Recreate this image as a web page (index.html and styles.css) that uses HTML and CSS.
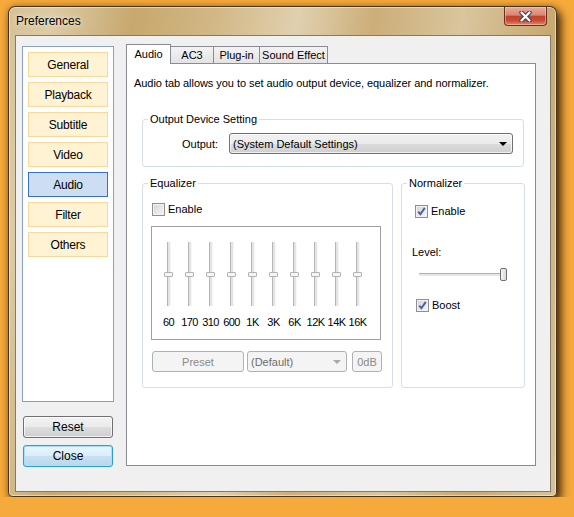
FILE: index.html
```html
<!DOCTYPE html>
<html lang="en">
<head>
    <meta charset="UTF-8">
    <title>Preferences</title>
    <link rel="stylesheet" href="styles.css">
</head>
<body>
    <div class="window">
        <div class="titlebar">
            <span class="title">Preferences</span>
            <button class="close-btn" type="button">
                <svg width="13" height="11" viewBox="0 0 13 11">
                    <path d="M2.5 1.5 L10.5 9.5 M10.5 1.5 L2.5 9.5" stroke="#3a4658" stroke-width="4.4" stroke-linecap="round"/>
                    <path d="M2.5 1.5 L10.5 9.5 M10.5 1.5 L2.5 9.5" stroke="#fff" stroke-width="2.2" stroke-linecap="round"/>
                </svg>
            </button>
        </div>

        <div class="client">
            <div class="sidebar">
                <div class="nav-list">
                    <div class="nav-item">General</div>
                    <div class="nav-item">Playback</div>
                    <div class="nav-item">Subtitle</div>
                    <div class="nav-item">Video</div>
                    <div class="nav-item active">Audio</div>
                    <div class="nav-item">Filter</div>
                    <div class="nav-item">Others</div>
                </div>
                <button class="btn reset" type="button">Reset</button>
                <button class="btn btn-default" type="button">Close</button>
            </div>

            <div class="tabs">
                <div class="tab-strip">
                    <div class="tab active" style="width: 45px;">Audio</div>
                    <div class="tab" style="width: 44px;">AC3</div>
                    <div class="tab" style="width: 47px;">Plug-in</div>
                    <div class="tab" style="width: 69px;">Sound Effect</div>
                </div>

                <div class="tab-panel">
                    <p class="desc">Audio tab allows you to set audio output device, equalizer and normalizer.</p>

                    <fieldset class="group output-group">
                        <legend>Output Device Setting</legend>
                        <div class="output-row">
                            <label>Output:</label>
                            <div class="select">
                                <span>(System Default Settings)</span>
                                <span class="arrow"></span>
                            </div>
                        </div>
                    </fieldset>

                    <div class="group-row">
                        <fieldset class="group eq-group">
                            <legend>Equalizer</legend>
                            <div class="check-row eq-enable">
                                <span class="check"></span>
                                <span>Enable</span>
                            </div>

                            <div class="eq-box" id="eq-box">
                                <!-- bands are filled in below -->
                            </div>

                            <div class="eq-buttons">
                                <button class="dis-btn preset" type="button">Preset</button>
                                <div class="combo">
                                    <span>(Default)</span>
                                    <span class="arrow grey"></span>
                                </div>
                                <button class="dis-btn db" type="button">0dB</button>
                            </div>
                        </fieldset>

                        <fieldset class="group norm-group">
                            <legend>Normalizer</legend>
                            <div class="check-row norm-enable">
                                <span class="check">
                                    <svg width="11" height="11" viewBox="0 0 11 11"><path d="M2.2 5.6 L4.4 8.2 L8.8 1.9" fill="none" stroke="#4862a6" stroke-width="2"/></svg>
                                </span>
                                <span>Enable</span>
                            </div>
                            <div class="level">Level:</div>
                            <div class="hslider">
                                <div class="htrack"></div>
                                <div class="hthumb"></div>
                            </div>
                            <div class="check-row boost">
                                <span class="check">
                                    <svg width="11" height="11" viewBox="0 0 11 11"><path d="M2.2 5.6 L4.4 8.2 L8.8 1.9" fill="none" stroke="#4862a6" stroke-width="2"/></svg>
                                </span>
                                <span>Boost</span>
                            </div>
                        </fieldset>
                    </div>
                </div>
            </div>
        </div>
    </div>

    <script>
        const bands = ['60', '170', '310', '600', '1K', '3K', '6K', '12K', '14K', '16K'];
        const eqBox = document.getElementById('eq-box');

        bands.forEach((name) => {
            const band = document.createElement('div');
            band.className = 'band';
            band.innerHTML = `
                <div class="vtrack"><div class="vthumb"></div></div>
                <span>${name}</span>
            `;
            eqBox.appendChild(band);
        });
    </script>
</body>
</html>
```

FILE: styles.css
```css
body {
    margin: 0;
    background-color: #f6aa3c;
    font-family: "Liberation Sans", Arial, sans-serif;
    font-size: 11px;
    color: #000;
}
.window {
    box-sizing: border-box;
    width: 549px;
    height: 491px;
    margin: 6px 0 0 8px;
    padding: 0 5px 4px 6px;
    display: flex;
    flex-direction: column;
    border: 1px solid rgba(45, 30, 10, 0.85);
    border-radius: 7px 7px 5px 5px;
    background: linear-gradient(100deg, #d6c196 0%, #dccba6 7%, #c7a86e 20%, #d2b886 33%, #e0d0b0 46%, #ccae78 58%, #d9c59e 72%, #c8a970 86%, #d7c39a 100%);
    box-shadow: inset 0 0 0 1px rgba(255, 244, 220, 0.55), 4px 5px 10px rgba(45, 20, 0, 0.85), 0 0 7px rgba(70, 35, 0, 0.35);
}
.titlebar {
    height: 28px;
    display: flex;
    justify-content: space-between;
    align-items: flex-start;
}
.title {
    margin: 7px 0 0 1px;
    font-size: 12px;
    line-height: 14px;
    text-shadow: 0 0 6px #f3e9d4, 0 0 3px #f3e9d4;
}
.close-btn {
    box-sizing: border-box;
    width: 43px;
    height: 19px;
    margin-right: 4px;
    padding: 0;
    display: flex;
    justify-content: center;
    align-items: center;
    border: 1px solid #6e2e22;
    border-top: none;
    border-radius: 0 0 4px 4px;
    background: linear-gradient(#e9ab9a 0%, #da8674 45%, #c4422b 52%, #cb4a32 75%, #e08a70 100%);
    box-shadow: inset 0 0 0 1px rgba(255, 215, 200, 0.45);
}
.client {
    flex: 1;
    display: flex;
    border: 1px solid #857a66;
    background-color: #f0f0f0;
}

/* left side */
.sidebar {
    width: 92px;
    margin: 10px 0 0 6px;
    display: flex;
    flex-direction: column;
}
.nav-list {
    box-sizing: border-box;
    height: 356px;
    padding: 5px;
    display: flex;
    flex-direction: column;
    gap: 5px;
    border: 1px solid #88a2bd;
    background-color: #fff;
}
.nav-item {
    box-sizing: border-box;
    height: 25px;
    line-height: 24px;
    text-align: center;
    font-size: 12px;
    letter-spacing: -0.2px;
    border: 1px solid #f8d99c;
    background-color: #fff3d3;
}
.nav-item.active {
    border-color: #3a70c2;
    background-color: #cddef2;
}
.btn {
    box-sizing: border-box;
    width: 90px;
    height: 22px;
    margin-left: 1px;
    padding: 0;
    font-family: inherit;
    font-size: 12px;
    color: #000;
    border: 1px solid #707070;
    border-radius: 3px;
    background: linear-gradient(#f2f2f2 0%, #ebebeb 50%, #dddddd 50%, #cfcfcf 100%);
    box-shadow: inset 0 0 0 1px rgba(255, 255, 255, 0.7);
}
.reset {
    margin-top: 14px;
}
.btn-default {
    margin-top: 7px;
    border-color: #2b9ed9;
    background: linear-gradient(#eaf5fc 0%, #dcedf8 50%, #c7e1f2 50%, #b9d7ec 100%);
    box-shadow: inset 0 0 0 1px #a6e0f9;
}

/* tabs */
.tabs {
    width: 410px;
    margin: 8px 0 0 12px;
    display: flex;
    flex-direction: column;
}
.tab-strip {
    height: 19px;
    display: flex;
    align-items: flex-end;
}
.tab {
    box-sizing: border-box;
    height: 17px;
    margin-left: -1px;
    line-height: 16px;
    text-align: center;
    border: 1px solid #898c95;
    border-bottom: none;
    background: linear-gradient(#f3f3f3, #e3e3e3);
}
.tab.active {
    position: relative;
    z-index: 1;
    height: 20px;
    margin: 0 0 -1px 0;
    line-height: 19px;
    background: #fff;
}
.tab-panel {
    box-sizing: border-box;
    height: 403px;
    border: 1px solid #898c95;
    background-color: #fff;
}
.desc {
    margin: 12px 0 0 7px;
    line-height: 14px;
    letter-spacing: -0.05px;
}

/* group boxes */
.group {
    box-sizing: border-box;
    min-width: 0;
    margin: 0;
    padding: 0;
    border: 1px solid #d5dfe5;
    border-radius: 3px;
}
.group legend {
    margin-left: 5px;
    padding: 0 2px;
    line-height: 14px;
}
.output-group {
    width: 382px;
    height: 55px;
    margin: 22px 0 0 15px;
}
.output-row {
    margin-top: 7px;
    padding-left: 39px;
    display: flex;
    align-items: center;
}
.output-row label {
    width: 47px;
}
.select {
    box-sizing: border-box;
    width: 284px;
    height: 21px;
    padding: 0 5px 0 3px;
    display: flex;
    justify-content: space-between;
    align-items: center;
    border: 1px solid #707070;
    border-radius: 3px;
    background: linear-gradient(#f2f2f2 0%, #ebebeb 50%, #dddddd 50%, #cfcfcf 100%);
    box-shadow: inset 0 0 0 1px rgba(255, 255, 255, 0.7);
}
.arrow {
    width: 0;
    height: 0;
    border-left: 4px solid transparent;
    border-right: 4px solid transparent;
    border-top: 4px solid #000;
}
.arrow.grey {
    border-top-color: #a8a8a8;
}
.group-row {
    margin: 9px 0 0 15px;
    display: flex;
    gap: 8px;
}
.eq-group {
    width: 251px;
    height: 212px;
}
.norm-group {
    width: 124px;
    height: 212px;
}

/* checkboxes */
.check-row {
    display: flex;
    align-items: center;
    gap: 3px;
    line-height: 14px;
}
.check {
    box-sizing: border-box;
    width: 13px;
    height: 13px;
    display: flex;
    justify-content: center;
    align-items: center;
    border: 1px solid #8f8f8f;
    background: linear-gradient(135deg, #d4d4d4, #f7f7f7);
    box-shadow: inset 0 0 0 1px #f2f2f2;
}
.eq-enable {
    margin: 12px 0 0 9px;
}

/* equalizer */
.eq-box {
    box-sizing: border-box;
    width: 230px;
    height: 114px;
    margin: 10px 0 0 8px;
    padding: 15px 0 0 6px;
    display: flex;
    border: 1px solid #a0a0a0;
}
.band {
    width: 21px;
    display: flex;
    flex-direction: column;
    align-items: center;
}
.band span {
    margin-top: 9px;
    line-height: 14px;
    letter-spacing: -0.6px;
    white-space: nowrap;
}
.vtrack {
    box-sizing: border-box;
    width: 4px;
    height: 64px;
    display: flex;
    justify-content: center;
    align-items: center;
    border-left: 1px solid #b5b5b5;
    border-right: 1px solid #f7f7f7;
    background-color: #e4e4e4;
}
.vthumb {
    flex: none;
    box-sizing: border-box;
    width: 9px;
    height: 5px;
    border: 1px solid #b3b3b3;
    border-radius: 1px;
    background-color: #f5f5f5;
}
.eq-buttons {
    margin: 11px 0 0 9px;
    display: flex;
    align-items: center;
}
.dis-btn {
    box-sizing: border-box;
    height: 21px;
    padding: 0;
    font-family: inherit;
    font-size: 11px;
    color: #8a8a8a;
    border: 1px solid #adb2b5;
    border-radius: 3px;
    background-color: #f4f4f4;
}
.preset {
    width: 92px;
}
.db {
    width: 30px;
    margin-left: 5px;
}
.combo {
    box-sizing: border-box;
    width: 100px;
    height: 21px;
    margin-left: 3px;
    padding: 0 5px 0 3px;
    display: flex;
    justify-content: space-between;
    align-items: center;
    color: #6d6d6d;
    border: 1px solid #adb2b5;
    border-radius: 3px;
    background-color: #f4f4f4;
}

/* normalizer */
.norm-enable {
    margin: 14px 0 0 13px;
}
.level {
    margin: 27px 0 0 10px;
    line-height: 14px;
}
.hslider {
    width: 88px;
    height: 13px;
    margin: 9px 0 0 17px;
    display: flex;
    align-items: center;
}
.htrack {
    flex: 1;
    box-sizing: border-box;
    height: 3px;
    border-top: 1px solid #b0b0b0;
    background-color: #e7e7e7;
}
.hthumb {
    box-sizing: border-box;
    width: 7px;
    height: 13px;
    margin-left: -6px;
    border: 1px solid #707070;
    border-radius: 2px;
    background: linear-gradient(90deg, #f4f4f4, #dcdcdc);
}
.boost {
    margin: 17px 0 0 14px;
}
```
